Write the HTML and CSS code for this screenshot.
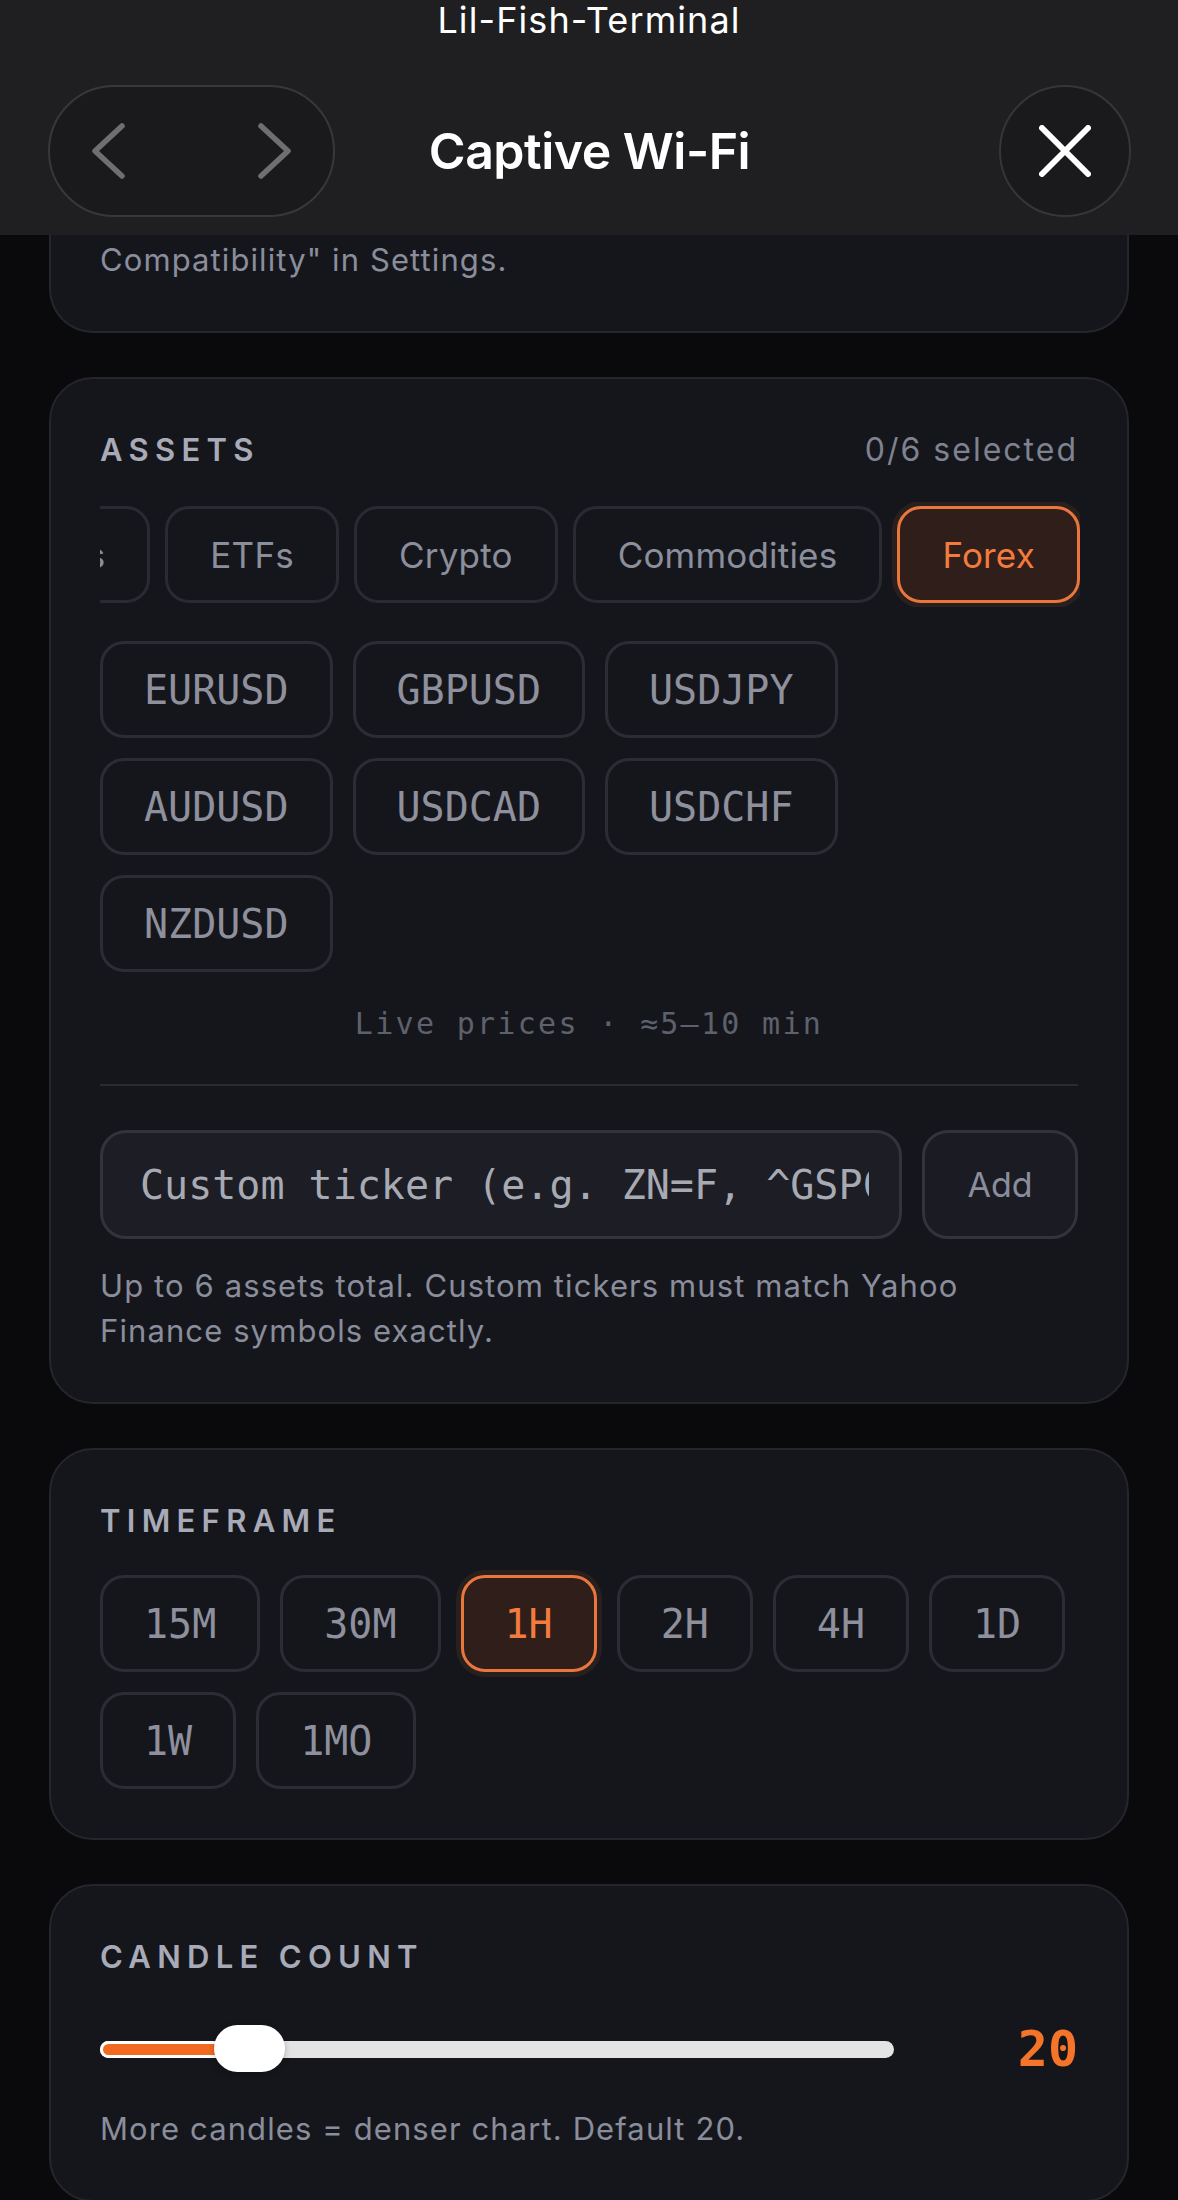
FILE: index.html
```html
<!DOCTYPE html>
<html lang="en">
<head>
  <meta charset="UTF-8">
  <meta name="viewport" content="width=device-width, initial-scale=1.0">
  <title>Captive Wi-Fi</title>
  <link rel="stylesheet" href="styles.css">
</head>
<body>
  <header class="sheet-header">
    <div class="app-name">Lil-Fish-Terminal</div>
    <div class="nav-row">
      <div class="nav-pill">
        <button class="nav-btn" aria-label="Back">
          <svg width="40" height="60" viewBox="0 0 40 60"><path d="M34 5 L7 30 L34 55" /></svg>
        </button>
        <button class="nav-btn" aria-label="Forward">
          <svg width="40" height="60" viewBox="0 0 40 60"><path d="M6 5 L33 30 L6 55" /></svg>
        </button>
      </div>
      <h1 class="sheet-title">Captive Wi-Fi</h1>
      <button class="close-btn" aria-label="Close">
        <svg width="52" height="52" viewBox="0 0 52 52"><path d="M3 3 L49 49 M49 3 L3 49" /></svg>
      </button>
    </div>
  </header>

  <main class="content">
    <section class="card card-tail">
      <p class="hint">Compatibility" in Settings.</p>
    </section>

    <!-- Assets -->
    <section class="card">
      <div class="card-head">
        <h2 class="label">Assets</h2>
        <span class="count">0/6 selected</span>
      </div>
      <div class="tabs">
        <button class="tab">Stocks</button>
        <button class="tab">ETFs</button>
        <button class="tab">Crypto</button>
        <button class="tab">Commodities</button>
        <button class="tab active">Forex</button>
      </div>
      <div class="chips">
        <button class="chip">EURUSD</button>
        <button class="chip">GBPUSD</button>
        <button class="chip">USDJPY</button>
        <button class="chip">AUDUSD</button>
        <button class="chip">USDCAD</button>
        <button class="chip">USDCHF</button>
        <button class="chip">NZDUSD</button>
      </div>
      <p class="live-note">Live prices · ≈5–10 min</p>
      <hr class="divider">
      <div class="custom-row">
        <input type="text" class="ticker-input" placeholder="Custom ticker (e.g. ZN=F, ^GSPC)">
        <button class="add-btn">Add</button>
      </div>
      <p class="hint">Up to 6 assets total. Custom tickers must match Yahoo Finance symbols exactly.</p>
    </section>

    <!-- Timeframe -->
    <section class="card">
      <div class="card-head">
        <h2 class="label">Timeframe</h2>
      </div>
      <div class="chips">
        <button class="chip">15M</button>
        <button class="chip">30M</button>
        <button class="chip active">1H</button>
        <button class="chip">2H</button>
        <button class="chip">4H</button>
        <button class="chip">1D</button>
        <button class="chip">1W</button>
        <button class="chip">1MO</button>
      </div>
    </section>

    <!-- Candle count -->
    <section class="card">
      <div class="card-head">
        <h2 class="label">Candle count</h2>
      </div>
      <div class="slider-row">
        <div class="slider" style="--pct: 0.158">
          <div class="track"><div class="fill"></div></div>
          <div class="thumb"></div>
        </div>
        <span class="slider-value">20</span>
      </div>
      <p class="hint">More candles = denser chart. Default 20.</p>
    </section>
  </main>
</body>
</html>
```

FILE: styles.css
```css
body {
  margin: 0;
  background: #0a0a0c;
  font-family: 'Inter', 'Noto Sans', sans-serif;
  color: #8a8d9b;
}

button {
  font-family: inherit;
  cursor: pointer;
}

/* Sheet header */
.sheet-header {
  background: #1f1f21;
  padding-bottom: 18px;
}

.app-name {
  text-align: center;
  color: #fff;
  font-size: 36px;
  letter-spacing: 1.1px;
  line-height: 40px;
}

.nav-row {
  display: grid;
  grid-template-columns: 1fr auto 1fr;
  align-items: center;
  margin-top: 45px;
  padding: 0 47px 0 48px;
}

.nav-pill {
  justify-self: start;
  width: 287px;
  height: 132px;
  box-sizing: border-box;
  border: 2px solid #38383b;
  border-radius: 66px;
  background: #1a1a1c;
  display: flex;
  align-items: center;
  justify-content: space-between;
  padding: 0 38px;
}

.nav-btn {
  background: none;
  border: none;
  padding: 0;
  display: flex;
}

.nav-btn path {
  fill: none;
  stroke: #6f6f72;
  stroke-width: 5.5;
  stroke-linecap: round;
  stroke-linejoin: round;
}

.sheet-title {
  margin: 0;
  color: #fff;
  font-size: 50px;
  font-weight: 600;
  letter-spacing: -0.5px;
}

.close-btn {
  justify-self: end;
  width: 132px;
  height: 132px;
  border-radius: 50%;
  border: 2px solid #363639;
  background: #1a1a1c;
  display: flex;
  align-items: center;
  justify-content: center;
  padding: 0;
}

.close-btn path {
  stroke: #fff;
  stroke-width: 6;
  stroke-linecap: round;
}

/* Cards */
.content {
  padding: 0 49px;
  display: flex;
  flex-direction: column;
  gap: 44px;
}

.card {
  background: #15161b;
  border: 2px solid #25262d;
  border-radius: 44px;
  padding: 49px;
}

.card-tail {
  border-top: none;
  border-radius: 0 0 44px 44px;
  padding-top: 2px;
}

.card-head {
  display: flex;
  justify-content: space-between;
  align-items: baseline;
  line-height: 44px;
}

.label {
  margin: 0;
  font-size: 31px;
  font-weight: 600;
  letter-spacing: 6.3px;
  text-transform: uppercase;
  color: #a8aab8;
}

.count {
  font-size: 32px;
  letter-spacing: 2px;
  color: #7f8290;
}

.hint {
  margin: 24px 0 0;
  font-size: 31px;
  letter-spacing: 1.1px;
  line-height: 45px;
  color: #8a8d9b;
}

.card-tail .hint {
  margin-top: 0;
}

/* Category tabs, scrolled to the end */
.tabs {
  margin-top: 30px;
  display: flex;
  gap: 15px;
  justify-content: flex-end;
  overflow: hidden;
  padding: 4px 0;
  margin-bottom: -4px;
  margin-right: -2px;
}

.tab {
  flex-shrink: 0;
  height: 97px;
  padding: 0 42px;
  border: 3px solid #2a2b32;
  border-radius: 24px;
  background: transparent;
  color: #8b8e9b;
  font-size: 35px;
  letter-spacing: 0.2px;
}

.tab.active,
.chip.active {
  border-color: #e8763d;
  background: #2f1e1a;
  color: #f27b3d;
  box-shadow: 0 0 0 5px rgba(232, 118, 61, 0.09);
}

/* Symbol / timeframe chips */
.chips {
  margin-top: 38px;
  display: flex;
  flex-wrap: wrap;
  gap: 20px;
}

.card-head + .chips {
  margin-top: 32px;
}

.chip {
  height: 97px;
  padding: 0 41px;
  border: 3px solid #2c2d34;
  border-radius: 24px;
  background: transparent;
  color: #8e909d;
  font-family: 'DejaVu Sans Mono', monospace;
  font-size: 40px;
}

.live-note {
  margin: 34px 0 0;
  text-align: center;
  font-family: 'DejaVu Sans Mono', monospace;
  font-size: 30px;
  letter-spacing: 2.3px;
  color: #5e616c;
}

.divider {
  margin: 43px 0 0;
  border: none;
  height: 2px;
  background: #2a2b31;
}

.custom-row {
  margin-top: 44px;
  display: flex;
  gap: 20px;
}

.ticker-input {
  flex: 1;
  min-width: 0;
  height: 109px;
  box-sizing: border-box;
  padding: 0 30px 0 37px;
  border: 3px solid #32333b;
  border-radius: 26px;
  background: #1c1d25;
  color: #d0d2da;
  font-family: 'DejaVu Sans Mono', monospace;
  font-size: 40px;
  outline: none;
}

.ticker-input::placeholder {
  color: #a8aab3;
}

.add-btn {
  width: 156px;
  height: 109px;
  border: 3px solid #32333b;
  border-radius: 26px;
  background: #1a1b23;
  color: #8a8d9b;
  font-size: 34px;
}

/* Candle slider */
.slider-row {
  margin-top: 41px;
  display: flex;
  align-items: center;
  gap: 40px;
}

.slider {
  flex: 1;
  position: relative;
  height: 58px;
  display: flex;
  align-items: center;
}

.track {
  width: 100%;
  height: 17px;
  border-radius: 9px;
  background: #e4e4e4;
  position: relative;
}

.fill {
  width: calc((100% - 71px) * var(--pct) + 35px);
  height: 100%;
  box-sizing: border-box;
  border: 3px solid #fff;
  border-radius: 9px;
  background: #f26a21;
}

.thumb {
  position: absolute;
  top: 5px;
  left: calc((100% - 71px) * var(--pct));
  width: 71px;
  height: 47px;
  border-radius: 24px;
  background: #fff;
  box-shadow: 0 2px 6px rgba(0, 0, 0, 0.25);
}

.slider-value {
  width: 144px;
  text-align: right;
  font-family: 'DejaVu Sans Mono', monospace;
  font-weight: 700;
  font-size: 50px;
  line-height: 58px;
  color: #f47429;
}

.slider-row + .hint {
  margin-top: 28px;
}
```
